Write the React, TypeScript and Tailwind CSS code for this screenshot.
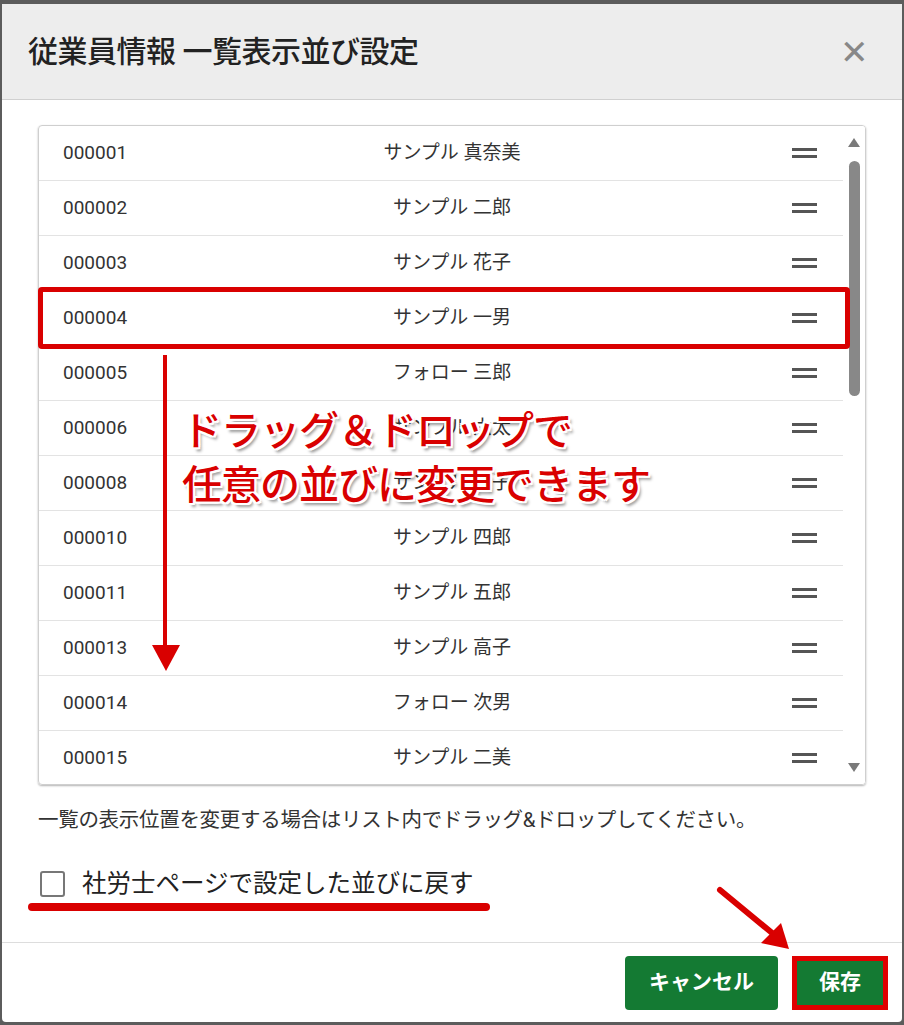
import React from "react";

const rows: [string, string][] = [
  ["000001", "サンプル 真奈美"],
  ["000002", "サンプル 二郎"],
  ["000003", "サンプル 花子"],
  ["000004", "サンプル 一男"],
  ["000005", "フォロー 三郎"],
  ["000006", "サンプル 六太"],
  ["000008", "サンプル 七子"],
  ["000010", "サンプル 四郎"],
  ["000011", "サンプル 五郎"],
  ["000013", "サンプル 高子"],
  ["000014", "フォロー 次男"],
  ["000015", "サンプル 二美"],
];

const font = { fontFamily: 'Roboto, "Noto Sans CJK JP", sans-serif' };

export default function App() {
  return (
    <div className="w-[904px] h-[1025px] bg-[#5c5c5c] pt-[4px] px-[2px] relative overflow-hidden" style={font}>
      <div className="bg-white h-[1018px] rounded-sm flex flex-col">
        <div className="h-[96px] bg-[#ededed] border-b border-[#d0d0d0] flex items-center justify-between pl-[26px] pr-[34px]">
          <div className="text-[30px] text-[#222] font-medium tracking-[-0.5px]">従業員情報 一覧表示並び設定</div>
          <div className="text-[34px] text-[#888] font-light leading-none">✕</div>
        </div>
        <div className="px-[36px] pt-[25px]">
          <div className="h-[660px] border border-[#cfcfcf] rounded shadow-[0_1px_2px_rgba(0,0,0,0.3)] flex overflow-hidden">
            <div className="flex-1">
              {rows.map(([id, name]) => (
                <div key={id} className="h-[55px] border-b border-[#e3e3e3] flex items-center text-[19px] text-[#333]">
                  <div className="w-[220px] pl-[24px]">{id}</div>
                  <div className="flex-1 text-center pr-[138px]">{name}</div>
                  <div className="w-[60px] flex flex-col gap-[4px] items-start pl-[9px]">
                    <div className="w-[25px] h-[3px] bg-[#555]" />
                    <div className="w-[25px] h-[3px] bg-[#555]" />
                  </div>
                </div>
              ))}
            </div>
            <div className="w-[22px] bg-white flex flex-col items-center pt-[12px] pb-[12px]">
              <div className="w-0 h-0 border-l-[6px] border-r-[6px] border-b-[9px] border-l-transparent border-r-transparent border-b-[#7a7a7a]" />
              <div className="w-[11px] h-[235px] bg-[#888] rounded-full mt-[14px]" />
              <div className="flex-1" />
              <div className="w-0 h-0 border-l-[6px] border-r-[6px] border-t-[9px] border-l-transparent border-r-transparent border-t-[#7a7a7a]" />
            </div>
          </div>
          <div className="mt-[20px] text-[20.5px] text-[#333] tracking-[-0.3px]">一覧の表示位置を変更する場合はリスト内でドラッグ&amp;ドロップしてください。</div>
          <div className="mt-[30px] flex items-center gap-[17px] pl-[2px] text-[24.5px] text-[#222]">
            <div className="w-[25px] h-[26px] border-[2px] border-[#777] rounded-[3px]" />
            <span>社労士ページで設定した並びに戻す</span>
          </div>
        </div>
        <div className="mt-auto border-t border-[#ddd] h-[80px] flex items-center justify-end gap-[14px] pr-[14px]">
          <div className="h-[54px] w-[153px] bg-[#147a33] rounded text-white text-[21px] font-bold flex items-center justify-center">キャンセル</div>
          <div className="h-[54px] w-[96px] bg-[#147a33] text-white text-[21px] font-bold flex items-center justify-center border-[5px] border-[#e00000]">保存</div>
        </div>
      </div>

      {/* annotations */}
      <div className="absolute left-[38px] top-[287px] w-[812px] h-[62px] border-[5px] border-[#d90000] rounded-sm" />
      <div className="absolute left-[163px] top-[355px] w-[4px] h-[300px] bg-[#d90000]" />
      <div className="absolute left-[152px] top-[645px] w-0 h-0 border-l-[14px] border-r-[14px] border-t-[26px] border-l-transparent border-r-transparent border-t-[#d90000]" />
      <div className="absolute left-[182px] top-[405px] text-[40px] leading-[54px] text-[#d90000] font-medium tracking-[-1px]" style={{ textShadow: "2px 0 #fff,-2px 0 #fff,0 2px #fff,0 -2px #fff,2px 2px #fff,-2px -2px #fff,2px -2px #fff,-2px 2px #fff,3px 4px 3px rgba(0,0,0,0.4)" }}>
        <div>ドラッグ＆ドロップで</div>
        <div>任意の並びに変更できます</div>
      </div>
      <div className="absolute left-[28px] top-[903px] w-[462px] h-[8px] bg-[#d90000] rounded-full" />
      <svg className="absolute left-[715px] top-[885px]" width="80" height="70" viewBox="0 0 80 70">
        <line x1="5" y1="5" x2="62" y2="52" stroke="#d90000" strokeWidth="6" strokeLinecap="round" />
        <polygon points="74,64 46,58 66,38" fill="#d90000" />
      </svg>
    </div>
  );
}
